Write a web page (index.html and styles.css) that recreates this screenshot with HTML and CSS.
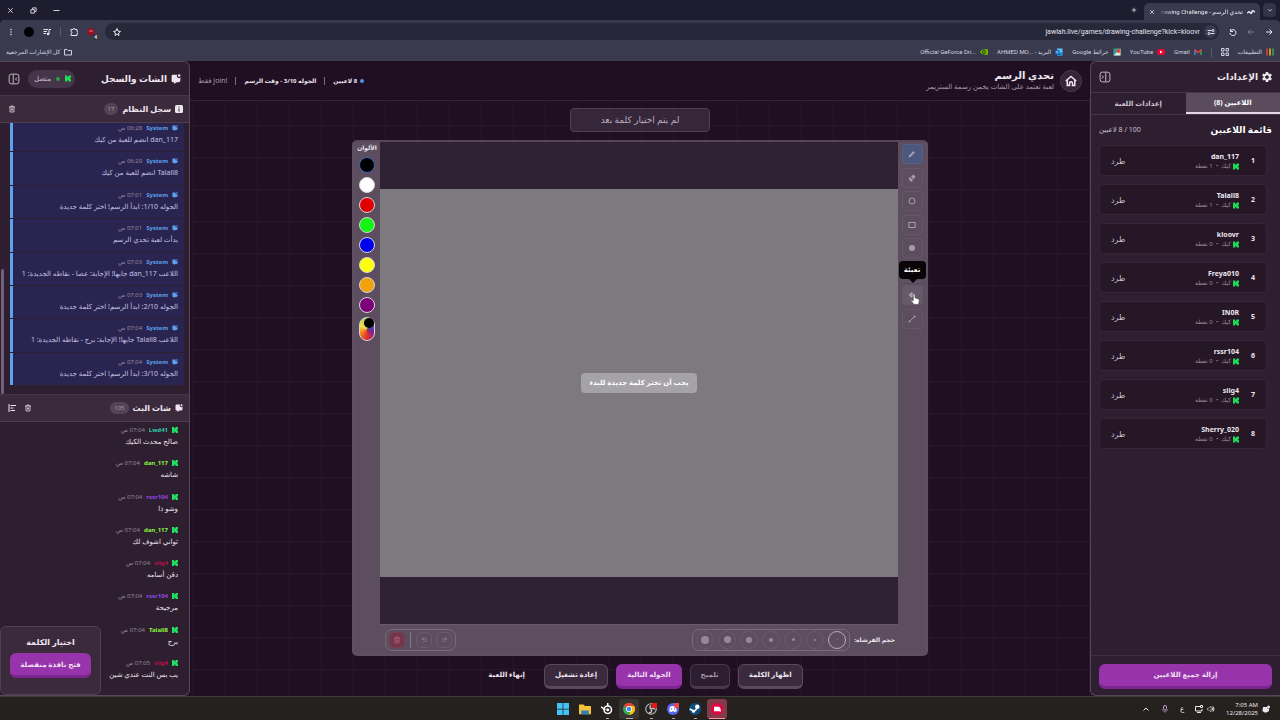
FILE: index.html
```
<!DOCTYPE html>
<html lang="ar" dir="rtl">
<head>
    <meta charset="UTF-8">
    <meta name="viewport" content="width=device-width, initial-scale=1.0">
    <title>تحدي الرسم - Drawing Challenge</title>
    <link rel="stylesheet" href="styles.css">
</head>
<body>
    <svg class="sprite" aria-hidden="true">
        <symbol id="kick" viewBox="0 0 8 8"><path d="M0 0h3v2h1V1h1V0h3v3H7v1H6v0h1v1h1v3H5V7H4V6H3v2H0z"/></symbol>
        <symbol id="chat" viewBox="0 0 16 16"><path d="M3 1h7a3 3 0 0 0 5 4v5a3 3 0 0 1-3 3H9l-4 3v-3H3a2 2 0 0 1-2-2V3a2 2 0 0 1 2-2z"/><circle cx="13" cy="2.500" r="2"/></symbol>
        <symbol id="trash" viewBox="0 0 16 16"><path d="M2 4h12M6 4V2h4v2M4 4v10h8V4M7 7v4M9 7v4" fill="none" stroke="currentColor" stroke-width="1.500"/></symbol>
        <symbol id="panel" viewBox="0 0 16 16"><rect x="1.500" y="1.500" width="13" height="13" rx="3" fill="none" stroke="currentColor"/><path d="M7 2v12M12 6l-2 2 2 2" fill="none" stroke="currentColor"/></symbol>
        <symbol id="close" viewBox="0 0 16 16"><path d="M3 3l10 10M13 3L3 13" fill="none" stroke="currentColor" stroke-width="2"/></symbol>
    </svg>

    <div class="tabstrip">
        <button class="tab-list" aria-label="بحث"><svg viewBox="0 0 16 16"><path d="M3 6l5 5 5-5" fill="none" stroke="currentColor" stroke-width="2"/></svg></button>
        <div class="tab">
            <svg class="favicon" viewBox="0 0 16 8"><path d="M0 5c2 2 4-4 6 0s4 0 4-2 4-2 6 2" fill="none" stroke="currentColor" stroke-width="3"/></svg>
            <span class="tab-title">تحدي الرسم - Drawing Challenge</span>
            <button aria-label="إغلاق"><svg><use href="#close"/></svg></button>
        </div>
        <button class="new-tab" aria-label="علامة جديدة"><svg viewBox="0 0 16 16"><path d="M8 2v12M2 8h12" fill="none" stroke="currentColor" stroke-width="2"/></svg></button>
        <div class="window-buttons">
            <button aria-label="تصغير"><svg viewBox="0 0 16 16"><path d="M1 8h14" stroke="currentColor" stroke-width="2"/></svg></button>
            <button aria-label="استعادة"><svg viewBox="0 0 16 16"><path d="M2 6h8v8H2zM6 5V2h8v8h-3" fill="none" stroke="currentColor" stroke-width="2"/></svg></button>
            <button aria-label="إغلاق النافذة"><svg><use href="#close"/></svg></button>
        </div>
    </div>

    <div class="toolbar">
        <button aria-label="رجوع"><svg viewBox="0 0 16 16"><path d="M2 8h12M9 3l5 5-5 5" fill="none" stroke="currentColor" stroke-width="2"/></svg></button>
        <button class="faded" aria-label="تقدم"><svg viewBox="0 0 16 16"><path d="M14 8H2M7 3L2 8l5 5" fill="none" stroke="currentColor" stroke-width="2"/></svg></button>
        <button aria-label="إعادة تحميل"><svg viewBox="0 0 16 16"><path d="M3 2v5h5M3 6a6 6 0 1 1-1 4" fill="none" stroke="currentColor" stroke-width="2"/></svg></button>
        <div class="address">
            <span class="site-info"><svg viewBox="0 0 16 16"><path d="M1 5h8M7 11h8" stroke="currentColor" stroke-width="2"/><circle cx="12" cy="5" r="2" fill="none" stroke="currentColor" stroke-width="2"/><circle cx="4" cy="11" r="2" fill="none" stroke="currentColor" stroke-width="2"/></svg></span>
            <input type="text" dir="ltr" aria-label="العنوان" value="jawlah.live/games/drawing-challenge?kick=kloovr">
            <svg viewBox="0 0 16 16"><path d="M8 1l2 5 5 1-4 3 1 5-4-3-4 3 1-5-4-3 5-1z" fill="none" stroke="currentColor" stroke-width="2"/></svg>
        </div>
        <div class="extensions">
            <span class="ublock"><svg viewBox="0 0 16 16"><path d="M8 0l7 3v5c0 4-3 6-7 8-4-2-7-4-7-8V3z" fill="#a00d22"/><path d="M4 6h8" stroke="#fff"/></svg><b>4</b></span>
            <svg viewBox="0 0 16 16"><path d="M2 3h4a2 2 0 0 1 4 0h4v4a2 2 0 0 1 0 4v4H2v-4a2 2 0 0 0 0-4z" fill="none" stroke="currentColor" stroke-width="2"/></svg>
            <i class="divider"></i>
            <svg viewBox="0 0 16 16"><path d="M1 3h9M1 7h7M1 11h5M12 12V3h4" fill="none" stroke="currentColor" stroke-width="2"/><circle cx="10" cy="12" r="2.500" fill="currentColor"/></svg>
            <span class="avatar"></span>
            <svg viewBox="0 0 16 16" fill="currentColor"><circle cx="8" cy="3" r="1.500"/><circle cx="8" cy="8" r="1.500"/><circle cx="8" cy="13" r="1.500"/></svg>
        </div>
    </div>

    <div class="bookmarks">
        <a href="#"><svg viewBox="0 0 16 16"><path d="M2 1v14" stroke="#e94335" stroke-width="3"/><path d="M8 1v14" stroke="#f5b921" stroke-width="3"/><path d="M14 1v14" stroke="#34a853" stroke-width="3"/></svg>التطبيقات</a>
        <svg class="grid-icon" viewBox="0 0 16 16"><path d="M1 1h5v5H1zM10 1h5v5h-5zM1 10h5v5H1zM10 10h5v5h-5z" fill="none" stroke="currentColor" stroke-width="2"/></svg>
        <i class="divider"></i>
        <a href="#"><svg viewBox="0 0 16 16"><path d="M2 14V4" stroke="#4285f4" stroke-width="3"/><path d="M14 14V4" stroke="#34a853" stroke-width="3"/><path d="M1 3l7 6 7-6" fill="none" stroke="#ea4335" stroke-width="3"/></svg>Gmail</a>
        <a href="#"><svg viewBox="0 0 16 16"><rect y="2" width="16" height="12" rx="4" fill="#f00033"/><path d="M6 5l5 3-5 3z" fill="#fff"/></svg>YouTube</a>
        <a href="#"><svg viewBox="0 0 16 16"><path d="M1 1h14v14H1z" fill="#31a853"/><path d="M1 15L15 1v14z" fill="#dfe5ef"/><path d="M1 8l7-7h4L1 12z" fill="#4285f4"/><circle cx="11" cy="6" r="4" fill="#ea4335"/></svg>خرائط Google</a>
        <a href="#"><svg viewBox="0 0 16 16"><path d="M4 1h11v14H4z" fill="#5cc8f5"/><path d="M4 9h11v6H4z" fill="#1681d3"/><rect y="4" width="9" height="9" fill="#0a62b5"/><circle cx="4.500" cy="8.500" r="2" fill="none" stroke="#fff"/></svg><span>البريد - <bdi>AHMED MO...</bdi></span></a>
        <a href="#"><svg viewBox="0 0 16 16"><path d="M0 8c4-6 8-6 16-5v10C9 14 4 13 0 8z" fill="#76b900"/><circle cx="8" cy="8" r="3" fill="none" stroke="#274500" stroke-width="2"/></svg><bdi>Official GeForce Dri...</bdi></a>
        <a href="#" class="all"><svg viewBox="0 0 16 16"><path d="M1 3h5l2 2h7v9H1z" fill="none" stroke="currentColor" stroke-width="2"/></svg>كل الإشارات المرجعية</a>
    </div>

    <div class="app">
        <aside class="panel settings">
            <header class="panel-header">
                <svg class="gear" viewBox="0 0 16 16"><circle cx="8" cy="8" r="4.500" fill="none" stroke="currentColor" stroke-width="3"/><path d="M8 0v4M8 12v4M1 4l4 2M11 10l4 2M1 12l4-2M11 6l4-2" stroke="currentColor" stroke-width="4"/></svg>
                <h2>الإعدادات</h2>
                <button class="collapse" aria-label="طي اللوحة"><svg viewBox="0 0 16 16"><rect x="1.500" y="1.500" width="13" height="13" rx="3" fill="none" stroke="currentColor"/><path d="M9 2v12M4 6l2 2-2 2" fill="none" stroke="currentColor"/></svg></button>
            </header>
            <nav class="tabs">
                <button class="active">اللاعبين (8)</button>
                <button>إعدادات اللعبة</button>
            </nav>
            <div class="list-head">
                <h3>قائمة اللاعبين</h3>
                <span>100 / 8 لاعبين</span>
            </div>
            <ol class="players">
                <li><b>1</b><div class="who"><strong>dan_117</strong><small><svg><use href="#kick"/></svg>كيك &nbsp;•&nbsp; 1 نقطة</small></div><button>طرد</button></li>
                <li><b>2</b><div class="who"><strong>Talall8</strong><small><svg><use href="#kick"/></svg>كيك &nbsp;•&nbsp; 1 نقطة</small></div><button>طرد</button></li>
                <li><b>3</b><div class="who"><strong>kloovr</strong><small><svg><use href="#kick"/></svg>كيك &nbsp;•&nbsp; 0 نقطة</small></div><button>طرد</button></li>
                <li><b>4</b><div class="who"><strong>Freya010</strong><small><svg><use href="#kick"/></svg>كيك &nbsp;•&nbsp; 0 نقطة</small></div><button>طرد</button></li>
                <li><b>5</b><div class="who"><strong>IN0R</strong><small><svg><use href="#kick"/></svg>كيك &nbsp;•&nbsp; 0 نقطة</small></div><button>طرد</button></li>
                <li><b>6</b><div class="who"><strong>rssr104</strong><small><svg><use href="#kick"/></svg>كيك &nbsp;•&nbsp; 0 نقطة</small></div><button>طرد</button></li>
                <li><b>7</b><div class="who"><strong>siig4</strong><small><svg><use href="#kick"/></svg>كيك &nbsp;•&nbsp; 0 نقطة</small></div><button>طرد</button></li>
                <li><b>8</b><div class="who"><strong>Sherry_020</strong><small><svg><use href="#kick"/></svg>كيك &nbsp;•&nbsp; 0 نقطة</small></div><button>طرد</button></li>
            </ol>
            <footer class="panel-footer">
                <button class="btn primary">إزالة جميع اللاعبين</button>
            </footer>
        </aside>

        <main class="stage">
            <header class="stage-header">
                <a href="#" class="home" aria-label="الرئيسية"><svg viewBox="0 0 16 16"><path d="M1 8l7-6 7 6M3 7v7h3v-3a2 2 0 0 1 4 0v3h3V7" fill="none" stroke="currentColor" stroke-width="2"/></svg></a>
                <div class="heading">
                    <h1>تحدي الرسم</h1>
                    <p>لعبة تعتمد على الشات يخمن رسمة الستريمر</p>
                </div>
                <div class="status">
                    <b class="online">8 لاعبين</b>
                    <i></i>
                    <b>الجوله 3/10 - وقت الرسم</b>
                    <i></i>
                    <span>!join فقط</span>
                </div>
            </header>

            <div class="play">
                <div class="word">لم يتم اختيار كلمة بعد</div>
                <div class="board">
                    <div class="board-row">
                        <div class="tools">
                            <button class="active" aria-label="قلم"><svg viewBox="0 0 16 16"><path d="M1 15l1-4 9-9 3 3-9 9z"/></svg></button>
                            <button aria-label="ممحاة"><svg viewBox="0 0 16 16"><path d="M1 9l3-3 6 6-2 3H5zM6 5l5-4 4 4-4 6z"/></svg></button>
                            <button aria-label="دائرة"><svg viewBox="0 0 16 16"><circle cx="8" cy="8" r="6" fill="none" stroke="currentColor" stroke-width="2"/></svg></button>
                            <button aria-label="مستطيل"><svg viewBox="0 0 16 16"><rect x="2" y="3" width="12" height="10" fill="none" stroke="currentColor" stroke-width="2"/></svg></button>
                            <button aria-label="دائرة ممتلئة"><svg viewBox="0 0 16 16"><circle cx="8" cy="8" r="6"/></svg></button>
                            <button aria-label="مستطيل ممتلئ"><svg viewBox="0 0 16 16"><rect x="2" y="3" width="12" height="10"/></svg></button>
                            <button class="hovered" aria-label="تعبئة">
                                <svg viewBox="0 0 16 16"><path d="M1 8l6-6 6 6-6 6zM14 9l2 4h-3z"/></svg>
                                <span class="tooltip">تعبئة</span>
                                <svg class="cursor" viewBox="0 0 16 20"><path d="M5 10V2q1-2 3 0v6l6 2q2 1 1 4l-1 5H6L1 12q1-2 4 1z" fill="#fff" stroke="#333"/></svg>
                            </button>
                            <button aria-label="خط"><svg viewBox="0 0 16 16"><path d="M4 12l8-8" stroke="currentColor" stroke-width="2"/><circle cx="3" cy="13" r="2"/><circle cx="13" cy="3" r="2"/></svg></button>
                        </div>
                        <div class="canvas">
                            <div class="paper"><span>يجب أن تختر كلمة جديدة للبدء</span></div>
                        </div>
                        <div class="colors">
                            <h4>الألوان</h4>
                            <button class="black" aria-label="أسود"></button>
                            <button class="white" aria-label="أبيض"></button>
                            <button class="red" aria-label="أحمر"></button>
                            <button class="green" aria-label="أخضر"></button>
                            <button class="blue" aria-label="أزرق"></button>
                            <button class="yellow" aria-label="أصفر"></button>
                            <button class="orange" aria-label="برتقالي"></button>
                            <button class="purple" aria-label="بنفسجي"></button>
                            <button class="custom" aria-label="لون مخصص"><i></i></button>
                        </div>
                    </div>
                    <div class="board-bar">
                        <span class="label">حجم الفرشاة:</span>
                        <div class="group sizes">
                            <button class="active" aria-label="1"><i style="width: 1px; height: 1px"></i></button>
                            <button aria-label="2"><i style="width: 2px; height: 2px"></i></button>
                            <button aria-label="3"><i style="width: 3px; height: 3px"></i></button>
                            <button aria-label="4"><i style="width: 4px; height: 4px"></i></button>
                            <button aria-label="5"><i style="width: 6px; height: 6px"></i></button>
                            <button aria-label="6"><i style="width: 7px; height: 7px"></i></button>
                            <button aria-label="7"><i style="width: 8px; height: 8px"></i></button>
                        </div>
                        <div class="group history">
                            <button aria-label="إعادة"><svg viewBox="0 0 16 16"><path d="M14 2v6H8M13 7a6 6 0 1 0 0 5" fill="none" stroke="currentColor" stroke-width="2"/></svg></button>
                            <button aria-label="تراجع"><svg viewBox="0 0 16 16"><path d="M2 2v6h6M3 7a6 6 0 1 1 0 5" fill="none" stroke="currentColor" stroke-width="2"/></svg></button>
                            <i class="divider"></i>
                            <button class="clear" aria-label="مسح"><svg><use href="#trash"/></svg></button>
                        </div>
                    </div>
                </div>
                <div class="actions">
                    <button class="btn">اظهار الكلمة</button>
                    <button class="btn" disabled>تلميح</button>
                    <button class="btn primary">الجوله التالية</button>
                    <button class="btn">إعادة تشغيل</button>
                    <button class="btn plain">إنهاء اللعبة</button>
                </div>
            </div>
        </main>

        <aside class="panel chat">
            <header class="panel-header">
                <svg><use href="#chat"/></svg>
                <h2>الشات والسجل</h2>
                <span class="connected"><svg><use href="#kick"/></svg><i></i>متصل</span>
                <button class="collapse" aria-label="طي اللوحة"><svg><use href="#panel"/></svg></button>
            </header>
            <header class="section-header">
                <svg viewBox="0 0 16 16"><rect width="16" height="16" rx="3"/><path d="M8 3v2M8 7v6" stroke="#3b2a3c" stroke-width="2"/></svg>
                <h3>سجل النظام</h3>
                <span class="count">17</span>
                <button class="end" aria-label="مسح السجل"><svg><use href="#trash"/></svg></button>
            </header>
            <div class="scroll system">
                <ul class="messages">
                    <li><div><svg><use href="#chat"/></svg><b>System</b><time>06:28 ص</time></div><p>dan_117 انضم للعبة من كيك</p></li>
                    <li><div><svg><use href="#chat"/></svg><b>System</b><time>06:29 ص</time></div><p>Talall8 انضم للعبة من كيك</p></li>
                    <li><div><svg><use href="#chat"/></svg><b>System</b><time>07:01 ص</time></div><p>الجوله 1/10: ابدأ الرسم! اختر كلمة جديدة</p></li>
                    <li><div><svg><use href="#chat"/></svg><b>System</b><time>07:01 ص</time></div><p>بدأت لعبة تحدي الرسم</p></li>
                    <li><div><svg><use href="#chat"/></svg><b>System</b><time>07:03 ص</time></div><p>اللاعب dan_117 جابها! الإجابة: عصا - نقاطه الجديدة: 1</p></li>
                    <li><div><svg><use href="#chat"/></svg><b>System</b><time>07:03 ص</time></div><p>الجوله 2/10: ابدأ الرسم! اختر كلمة جديدة</p></li>
                    <li><div><svg><use href="#chat"/></svg><b>System</b><time>07:04 ص</time></div><p>اللاعب Talall8 جابها! الإجابة: برج - نقاطه الجديدة: 1</p></li>
                    <li><div><svg><use href="#chat"/></svg><b>System</b><time>07:04 ص</time></div><p>الجوله 3/10: ابدأ الرسم! اختر كلمة جديدة</p></li>
                </ul>
            </div>
            <header class="section-header">
                <svg><use href="#chat"/></svg>
                <h3>شات البث</h3>
                <span class="count">105</span>
                <button class="end" aria-label="مسح الشات"><svg><use href="#trash"/></svg></button>
                <button aria-label="محاذاة"><svg viewBox="0 0 16 16"><path d="M2 0v16M5 3h11M5 8h6M5 13h9" stroke="currentColor" stroke-width="2"/></svg></button>
            </header>
            <div class="scroll live">
                <ul class="messages">
                    <li><div><svg><use href="#kick"/></svg><b class="teal">Lwd41</b><time>07:04 ص</time></div><p>صالح محدث الكيك</p></li>
                    <li><div><svg><use href="#kick"/></svg><b class="lime">dan_117</b><time>07:04 ص</time></div><p>شاشه</p></li>
                    <li><div><svg><use href="#kick"/></svg><b class="violet">rssr104</b><time>07:04 ص</time></div><p>وشو ذا</p></li>
                    <li><div><svg><use href="#kick"/></svg><b class="lime">dan_117</b><time>07:04 ص</time></div><p>ثواني اشوف لك</p></li>
                    <li><div><svg><use href="#kick"/></svg><b class="crimson">siig4</b><time>07:04 ص</time></div><p>دقن أسامه</p></li>
                    <li><div><svg><use href="#kick"/></svg><b class="violet">rssr104</b><time>07:04 ص</time></div><p>مرجيحة</p></li>
                    <li><div><svg><use href="#kick"/></svg><b class="lime">Talall8</b><time>07:04 ص</time></div><p>برج</p></li>
                    <li><div><svg><use href="#kick"/></svg><b class="crimson">siig4</b><time>07:05 ص</time></div><p>يب بس النت عندي شين</p></li>
                </ul>
            </div>
            <div class="picker">
                <h3>اختيار الكلمة</h3>
                <button class="btn primary">فتح نافذة منفصلة</button>
            </div>
        </aside>
    </div>

    <div class="taskbar" dir="ltr">
        <div class="apps">
            <button aria-label="ابدأ"><svg viewBox="0 0 16 16"><path d="M0 0h7.500v7.500H0zM8.500 0H16v7.500H8.500zM0 8.500h7.500V16H0zM8.500 8.500H16V16H8.500z" fill="#43c4f7"/></svg></button>
            <button aria-label="الملفات"><svg viewBox="0 0 16 16"><path d="M0 2h6l2 2h8v11H0z" fill="#f5c332"/><path d="M3 10h10v5H3z" fill="#2b7fc4"/></svg></button>
            <button class="open" aria-label="SteelSeries"><svg viewBox="0 0 16 16"><circle cx="9" cy="9" r="5" fill="none" stroke="#fff" stroke-width="2"/><circle cx="9" cy="9" r="2" fill="#fff"/><path d="M0 5l6 4M9 0v4" stroke="#fff" stroke-width="2"/></svg></button>
            <button class="open current" aria-label="Chrome"><svg viewBox="0 0 16 16"><circle cx="8" cy="8" r="8" fill="#34a853"/><path d="M1 4a8 8 0 0 1 14 0L8 8z" fill="#ea4335"/><path d="M15 4a8 8 0 0 1-7 12l3-8-3-4z" fill="#fbbc05"/><circle cx="8" cy="8" r="4" fill="#fff"/><circle cx="8" cy="8" r="3" fill="#4285f4"/></svg></button>
            <button class="open" aria-label="OBS"><svg viewBox="0 0 16 16"><circle cx="8" cy="8" r="7" fill="#222" stroke="#bbb" stroke-width="1.500"/><path d="M8 3a3 3 0 0 0 0 5M13 9a3 3 0 0 0-5-1M5 13a3 3 0 0 0 3-5" fill="none" stroke="#bbb" stroke-width="2"/><circle cx="13" cy="3" r="4" fill="#f01414"/></svg></button>
            <button class="open" aria-label="Discord"><svg viewBox="0 0 16 16"><circle cx="8" cy="8" r="8" fill="#5865f2"/><path d="M3 11l1-6q4-2 8 0l1 6-3 1-1-1H7l-1 1z" fill="#fff"/><circle cx="6" cy="8" r="1" fill="#5865f2"/><circle cx="10" cy="8" r="1" fill="#5865f2"/><circle cx="13" cy="3" r="4" fill="#e34a50"/></svg></button>
            <button class="open" aria-label="Steam"><svg viewBox="0 0 16 16"><circle cx="8" cy="8" r="8" fill="#0e4d7c"/><path d="M1 8l6 3 4-4" stroke="#fff" stroke-width="2" fill="none"/><circle cx="11" cy="5" r="3" fill="#fff"/><circle cx="6" cy="11" r="2" fill="#fff"/></svg></button>
            <button class="open alert" aria-label="البث"><svg viewBox="0 0 16 16"><circle cx="8" cy="8" r="8" fill="#e8003f"/><path d="M4 5h7l2 3v4l-2-1H4z" fill="#fff"/></svg></button>
        </div>
        <div class="tray">
            <svg viewBox="0 0 16 16"><path d="M3 11l5-5 5 5" fill="none" stroke="currentColor" stroke-width="2"/></svg>
            <svg viewBox="0 0 16 16"><rect x="5" y="1" width="6" height="9" rx="3" fill="none" stroke="#c9a0d6" stroke-width="2"/><path d="M2 8a6 5 0 0 0 12 0M8 13v3" fill="none" stroke="#c9a0d6"/></svg>
            <span>ع</span>
            <div class="tray-pair">
                <svg viewBox="0 0 16 16"><path d="M10 3H1v9h13V8M4 15h8M11 1h4v4h-4z" fill="none" stroke="currentColor" stroke-width="2"/></svg>
                <svg viewBox="0 0 16 16"><path d="M1 6h3l4-4v12l-4-4H1z" fill="none" stroke="currentColor"/><path d="M10 5q2 3 0 6M12 3q4 5 0 10" fill="none" stroke="currentColor" stroke-width="2"/></svg>
            </div>
            <div class="clock">7:05 AM<br>12/28/2025</div>
            <svg viewBox="0 0 16 16" fill="#fff"><path d="M2 4h8v3h4v5l-5 3H5l-4-3z"/><circle cx="13" cy="4" r="3"/></svg>
        </div>
    </div>
</body>
</html>
```

FILE: styles.css
```
* {
    box-sizing: border-box;
}
body {
    margin: 0;
    height: 100vh;
    display: flex;
    flex-direction: column;
    overflow: hidden;
    background-color: #200f22;
    color: #eee6ef;
    font-family: "Noto Sans", "DejaVu Sans", sans-serif;
    font-size: 7px;
    line-height: 12px;
}
h1, h2, h3, h4, p, ul, ol {
    margin: 0;
    padding: 0;
    list-style: none;
}
button {
    padding: 0;
    border: 0;
    background: none;
    color: inherit;
    font: inherit;
}
a {
    color: inherit;
    text-decoration: none;
}
svg {
    width: 8px;
    height: 8px;
    flex: none;
    display: block;
    fill: currentColor;
}
.sprite {
    position: absolute;
    width: 0;
    height: 0;
}
.divider {
    width: 1px;
    height: 9px;
    background-color: #5a5a70;
}

/* browser */
.tabstrip {
    height: 20px;
    display: flex;
    align-items: center;
    padding: 0 4px 0 7px;
    background-color: #1e1d2f;
    font-family: Roboto, "DejaVu Sans", sans-serif;
    font-size: 6px;
}
.tab-list {
    width: 13px;
    height: 14px;
    border-radius: 4px;
    background-color: #343448;
    display: grid;
    place-items: center;
}
.tab-list svg, .tab svg, .new-tab svg {
    width: 6px;
    height: 6px;
}
.tab {
    width: 116px;
    height: 17px;
    margin: 3px 3px 0 7px;
    padding: 0 5px;
    display: flex;
    align-items: center;
    gap: 4px;
    border-radius: 5px 5px 0 0;
    background-color: #393a4e;
}
.tab .favicon {
    width: 8px;
}
.tab-title {
    flex: 1;
    overflow: hidden;
    white-space: nowrap;
    mask-image: linear-gradient(to left, #000 85%, transparent);
}
.window-buttons {
    margin-right: auto;
    display: flex;
    gap: 16px;
}
.window-buttons svg {
    width: 7px;
    height: 7px;
}
.toolbar {
    height: 23px;
    display: flex;
    align-items: center;
    gap: 10px;
    padding: 0 7px;
    border-radius: 4px 4px 0 0;
    background-color: #393a4e;
}
.faded {
    opacity: 0.4;
}
.address {
    flex: 1;
    height: 17px;
    display: flex;
    align-items: center;
    padding: 0 2px 0 8px;
    border-radius: 9px;
    background-color: #262739;
}
.site-info {
    width: 13px;
    height: 13px;
    display: grid;
    place-items: center;
    border-radius: 50%;
    background-color: #393a4e;
}
.address input {
    flex: 1;
    min-width: 0;
    border: 0;
    padding: 0 4px;
    background: none;
    color: #e4e4f0;
    text-align: right;
    font-family: Roboto, sans-serif;
    font-size: 7px;
}
.extensions {
    display: flex;
    align-items: center;
    gap: 9px;
}
.ublock {
    position: relative;
}
.ublock b {
    position: absolute;
    right: -3px;
    bottom: -4px;
    padding: 0 1px;
    border-radius: 2px;
    background-color: #333;
    font-size: 5px;
    line-height: 6px;
}
.avatar {
    width: 10px;
    height: 10px;
    border-radius: 50%;
    background-color: #000;
}
.bookmarks {
    height: 18px;
    flex: none;
    display: flex;
    align-items: center;
    gap: 9px;
    padding: 0 6px;
    background-color: #393a4e;
    color: #d3d3e0;
    font-family: Roboto, "DejaVu Sans", sans-serif;
    font-size: 6px;
    white-space: nowrap;
}
.bookmarks a {
    display: flex;
    align-items: center;
    gap: 4px;
}
.bookmarks .all {
    margin-right: auto;
}

/* app */
.app {
    flex: 1;
    min-height: 0;
    display: flex;
}
.panel {
    width: 190px;
    flex: none;
    position: relative;
    display: flex;
    flex-direction: column;
    border: 1px solid #57465a;
    background-color: #2e1f30;
}
.settings {
    border-right: 0;
    border-radius: 6px 0 0 6px;
}
.chat {
    border-left: 0;
    border-radius: 0 6px 6px 0;
}
.panel-header {
    height: 33px;
    flex: none;
    display: flex;
    align-items: center;
    gap: 4px;
    padding: 0 8px;
    white-space: nowrap;
}
.settings .panel-header {
    height: 30px;
}
.panel-header > svg {
    width: 10px;
    height: 10px;
}
.panel-header h2 {
    font-size: 9px;
}
.collapse svg {
    width: 12px;
    height: 12px;
}
.settings .collapse {
    margin-right: auto;
}
.connected {
    margin: 0 auto 0 4px;
    height: 18px;
    padding: 0 4px 0 6px;
    display: flex;
    align-items: center;
    gap: 5px;
    border-radius: 9px;
    background-color: #44354a;
    color: #cdc1ce;
}
.connected svg, .who svg {
    width: 6px;
    height: 7px;
    fill: #1fdc55;
}
.connected i {
    width: 4px;
    height: 4px;
    border-radius: 50%;
    background-color: #22a04a;
}
.tabs {
    display: flex;
    height: 23px;
    flex: none;
    border-top: 1px solid #433446;
    border-bottom: 1px solid #433446;
}
.tabs button {
    flex: 1;
    color: #cdc1ce;
    font-weight: bold;
}
.tabs .active {
    background-color: #5b4c5d;
    border-bottom: 2px solid #e6d5e8;
    color: #fff;
}
.list-head {
    display: flex;
    align-items: center;
    justify-content: space-between;
    padding: 9px 8px;
    color: #cdc1ce;
}
.list-head h3 {
    color: #fff;
    font-size: 9px;
}
.players {
    flex: 1;
    padding: 0 13px 0 8px;
    display: flex;
    flex-direction: column;
    gap: 8px;
}
.players li {
    height: 31px;
    display: flex;
    align-items: center;
    padding: 0 11px;
    border: 1px solid #35253a;
    border-radius: 4px;
    background-color: #251726;
}
.players b {
    width: 16px;
}
.who {
    flex: 1;
}
.who strong {
    display: block;
    line-height: 11px;
}
.who small {
    display: flex;
    align-items: center;
    gap: 2px;
    color: #998b9c;
    font-size: 6px;
    line-height: 9px;
}
.players button {
    color: #cdc1ce;
    font-size: 8px;
}
.panel-footer {
    padding: 8px 8px 6px;
    border-top: 1px solid #3d2e40;
}
.panel-footer .btn {
    width: 100%;
}
.btn {
    height: 25px;
    padding: 0 10px 2px;
    border: 1px solid #5a4a5d;
    border-bottom-width: 3px;
    border-radius: 6px;
    background-color: #3b2a3e;
    font-weight: bold;
}
.btn:disabled {
    border-color: #483a4b;
    background-color: #2d1d30;
    color: #a194a3;
}
.btn.primary {
    border-color: #9733ab #9733ab #7b2591;
    background-color: #9733ab;
    color: #f0e0f4;
}
.btn.plain {
    border-color: transparent;
    background: none;
}

/* stage */
.stage {
    flex: 1;
    min-width: 0;
    display: flex;
    flex-direction: column;
}
.stage-header {
    height: 40px;
    flex: none;
    display: flex;
    align-items: center;
    gap: 6px;
    padding: 0 8px;
    border-bottom: 1px solid #35233a;
}
.home {
    width: 22px;
    height: 22px;
    display: grid;
    place-items: center;
    border: 1px solid #4a3a4d;
    border-radius: 50%;
    background-color: #352538;
}
.home svg {
    width: 12px;
    height: 12px;
}
.heading h1 {
    font-size: 10px;
    line-height: 12px;
}
.heading p {
    color: #a99cab;
}
.status {
    margin-right: auto;
    display: flex;
    align-items: center;
    gap: 8px;
}
.status b {
    font-size: 6px;
}
.status i {
    width: 1px;
    height: 8px;
    background-color: #7b6c7e;
}
.status span {
    color: #a99cab;
}
.online::before {
    content: "";
    display: inline-block;
    width: 4px;
    height: 4px;
    margin-left: 3px;
    border-radius: 50%;
    background-color: #4f94f5;
}
.play {
    flex: 1;
    min-height: 0;
    display: flex;
    flex-direction: column;
    align-items: center;
    padding: 7px 0;
    background-image: linear-gradient(to right, #28172b 1px, transparent 1px), linear-gradient(#28172b 1px, transparent 1px);
    background-size: 32px 32px;
    background-position: 3px 24px;
}
.word {
    width: 140px;
    height: 24px;
    flex: none;
    display: grid;
    place-items: center;
    border: 1px solid #4f3f52;
    border-radius: 4px;
    background-color: #35263a;
    color: #b9adbb;
    font-size: 9px;
}
.board {
    width: 64%;
    flex: 1;
    min-height: 0;
    margin: 8px 0;
    display: flex;
    flex-direction: column;
    border: 2px solid #5e5061;
    border-top-color: #554659;
    border-radius: 5px;
    background-color: #5c4e5f;
}
.board-row {
    flex: 1;
    display: flex;
    min-height: 0;
}
.tools {
    width: 28px;
    height: 189px;
    padding: 2px 0;
    display: flex;
    flex-direction: column;
    align-items: center;
    justify-content: space-between;
}
.tools button {
    position: relative;
    width: 21px;
    height: 20px;
    display: grid;
    place-items: center;
    border: 1px solid #665769;
    border-radius: 4px;
    color: #a79ba9;
}
.tools .active {
    border-color: #526287;
    background-color: #4c577d;
}
.tools .hovered {
    background-color: #665a6a;
}
.tooltip {
    position: absolute;
    bottom: 25px;
    left: -4px;
    width: 27px;
    height: 18px;
    border-radius: 4px;
    background-color: #080408;
    color: #fff;
    font-weight: bold;
    line-height: 18px;
}
.tooltip::after {
    content: "";
    position: absolute;
    top: 18px;
    left: 10px;
    border: 4px solid transparent;
    border-top-color: #080408;
}
.tools .cursor {
    position: absolute;
    left: 7px;
    top: 7px;
    width: 10px;
    height: 12px;
}
.canvas {
    flex: 1;
    display: flex;
    align-items: center;
    background-color: #2e2133;
    border-bottom: 1px solid #685a6b;
}
.paper {
    width: 100%;
    aspect-ratio: 4 / 3;
    display: grid;
    place-items: center;
    background-color: #7c797f;
}
.paper span {
    padding: 4px 8px;
    border-radius: 4px;
    background-color: #a5a3a7;
    color: #fff;
    font-weight: bold;
}
.colors {
    width: 26px;
    display: flex;
    flex-direction: column;
    align-items: center;
    gap: 4px;
    padding-top: 2px;
}
.colors h4 {
    font-size: 6px;
    line-height: 9px;
}
.colors button {
    width: 16px;
    height: 16px;
    flex: none;
    border: 1px solid #d9d2da;
    border-radius: 8px;
}
.colors .black {
    border-color: #3569b5;
    background-color: #000;
}
.colors .white {
    background-color: #fff;
}
.colors .red {
    background-color: #e00000;
}
.colors .green {
    background-color: #14f514;
}
.colors .blue {
    background-color: #0000f0;
}
.colors .yellow {
    background-color: #ffff10;
}
.colors .orange {
    background-color: #f2a20c;
}
.colors .purple {
    background-color: #790079;
}
.colors .custom {
    height: 24px;
    display: flex;
    justify-content: flex-start;
    align-items: flex-start;
    background: conic-gradient(#9cc940, #3b4fb0, #7a2390, #e02f2f, #f58a1f, #f3e34a, #9cc940);
}
.custom i {
    width: 10px;
    height: 10px;
    border-radius: 50%;
    background-color: #000;
}
.board-bar {
    height: 29px;
    flex: none;
    display: flex;
    align-items: center;
    gap: 4px;
    padding: 0 31px;
}
.board-bar .label {
    font-size: 6px;
    font-weight: bold;
}
.group {
    height: 22px;
    display: flex;
    align-items: center;
    gap: 4px;
    padding: 0 3px;
    border: 1px solid #776a7a;
    border-radius: 7px;
}
.group button {
    width: 18px;
    height: 18px;
    display: grid;
    place-items: center;
    border: 1px solid #695b6c;
    border-radius: 5px;
    color: #94889a;
}
.sizes button {
    border-radius: 50%;
}
.sizes .active {
    border-color: #b5abb7;
}
.sizes button i {
    border-radius: 50%;
    background-color: #94889a;
}
.history {
    margin-right: auto;
}
.history button {
    width: 16px;
    height: 16px;
}
.history svg {
    width: 5px;
    height: 5px;
}
.history .divider {
    height: 16px;
    margin: 0 1px;
    background-color: #837686;
}
.group .clear {
    border-color: #7b3b50;
    background-color: #74364b;
    color: #b1667b;
}
.clear svg {
    width: 8px;
    height: 8px;
}
.actions {
    flex: none;
    display: flex;
    gap: 8px;
}

/* chat */
.section-header {
    height: 28px;
    flex: none;
    display: flex;
    align-items: center;
    gap: 4px;
    padding: 0 6px 0 8px;
    border-top: 1px solid #44354a;
    border-bottom: 1px solid #4c3d50;
    background-color: #3a2a3c;
}
.section-header h3 {
    font-size: 8px;
}
.count {
    min-width: 12px;
    padding: 0 4px;
    border-radius: 6px;
    background-color: #524355;
    color: #a99cab;
    font-size: 6px;
    text-align: center;
}
.section-header .end {
    margin-right: auto;
}
.section-header button + button {
    margin-right: 4px;
}
.scroll {
    display: flex;
    flex-direction: column;
    justify-content: flex-end;
    overflow: hidden;
    padding: 0 5px 9px 10px;
}
.system {
    height: 271px;
    flex: none;
    position: relative;
}
.system::before {
    content: "";
    position: absolute;
    left: 1px;
    top: 146px;
    bottom: 0;
    width: 3px;
    border-radius: 2px;
    background-color: #71627a;
}
.live {
    flex: 1;
    min-height: 0;
}
.messages {
    flex: none;
    min-height: calc(100% + 4px);
    display: grid;
    grid-template-columns: minmax(0, 1fr);
    grid-auto-rows: 1fr;
    gap: 1px;
}
.live .messages {
    min-height: calc(100% + 1px);
}
.messages li {
    padding: 3px 6px;
    white-space: nowrap;
}
.messages div {
    display: flex;
    align-items: center;
    gap: 4px;
    font-size: 6px;
}
.messages svg {
    width: 6px;
    height: 6px;
    fill: #1fe060;
}
.messages time {
    color: #958799;
}
.system li {
    border-left: 3px solid #5ea1ee;
    background-color: #2a2450;
}
.system b {
    color: #5ea1ee;
}
.system svg {
    fill: #5ea1ee;
}
.system p {
    color: #c6c2e2;
}
.teal {
    color: #2fc9a8;
}
.lime {
    color: #8cf53c;
}
.violet {
    color: #9247e6;
}
.crimson {
    color: #b80f46;
}
.picker {
    position: absolute;
    left: 0;
    bottom: 0;
    width: 101px;
    height: 69px;
    padding: 9px 9px;
    border: 1px solid #4f4053;
    border-radius: 6px;
    background-color: #3a2a3c;
    text-align: center;
}
.picker h3 {
    margin-bottom: 5px;
    font-size: 8px;
}
.picker .btn {
    width: 100%;
    padding: 0;
    white-space: nowrap;
}

/* taskbar */
.taskbar {
    height: 24px;
    flex: none;
    display: grid;
    grid-template-columns: 1fr auto 1fr;
    border-top: 1px solid #3f3b3c;
    background-color: #24211f;
}
.apps {
    grid-column: 2;
    display: flex;
    align-items: center;
    gap: 2px;
}
.apps button {
    position: relative;
    width: 20px;
    height: 20px;
    display: grid;
    place-items: center;
    border-radius: 3px;
}
.apps svg {
    width: 12px;
    height: 12px;
}
.apps .current {
    background-color: #383432;
}
.apps .alert {
    background-color: #853a4b;
}
.open::after {
    content: "";
    position: absolute;
    bottom: 0;
    width: 3px;
    height: 1px;
    background-color: #b3acb0;
}
.current::after {
    width: 7px;
}
.alert::after {
    width: 16px;
    background-color: #ff93a5;
}
.tray {
    display: flex;
    align-items: center;
    justify-content: flex-end;
    gap: 11px;
    padding-right: 10px;
}
.tray-pair {
    display: flex;
    gap: 4px;
}
.clock {
    margin-right: -7px;
    font-size: 6px;
    line-height: 8px;
    text-align: right;
}
```
